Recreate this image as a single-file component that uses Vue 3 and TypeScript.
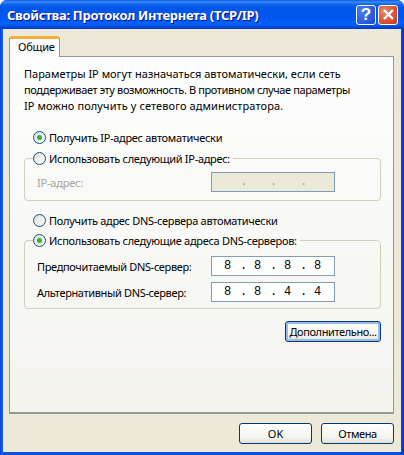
<script setup lang="ts">
interface Ip { label: string; parts: string[] }
const dns: Ip[] = [
  { label: 'Предпочитаемый DNS-сервер:', parts: ['8', '8', '8', '8'] },
  { label: 'Альтернативный DNS-сервер:', parts: ['8', '8', '4', '4'] },
]
</script>

<template>
  <div class="window">
    <header class="titlebar">
      <span class="title">Свойства: Протокол Интернета (TCP/IP)</span>
      <div class="caps">
        <button class="cap help"><span>?</span></button>
        <button class="cap close">
          <svg width="13" height="13" viewBox="0 0 13 13"><path d="M2 2 L11 11 M11 2 L2 11" stroke="#fff" stroke-width="2.4" fill="none" /></svg>
        </button>
      </div>
    </header>
    <div class="frame">
      <div class="tabs"><div class="tab">Общие</div></div>
      <section class="panel">
        <p class="intro">
          <span class="l1">Параметры IP могут назначаться автоматически, если сеть</span>
          <span class="l2">поддерживает эту возможность. В противном случае параметры</span>
          <span class="l3">IP можно получить у сетевого администратора.</span>
        </p>

        <label class="radio first"><i class="dot on"></i>Получить IP-адрес автоматически</label>
        <div class="group g1">
          <label class="radio legend"><i class="dot"></i>Использовать следующий IP-адрес:</label>
          <div class="row">
            <span class="disabled">IP-адрес:</span>
            <div class="ip off"><b></b><em>.</em><b></b><em>.</em><b></b><em>.</em><b></b></div>
          </div>
        </div>

        <label class="radio third"><i class="dot"></i>Получить адрес DNS-сервера автоматически</label>
        <div class="group g2">
          <label class="radio legend"><i class="dot on"></i>Использовать следующие адреса DNS-серверов:</label>
          <div v-for="d in dns" :key="d.label" class="row dnsrow">
            <span class="tight">{{ d.label }}</span>
            <div class="ip">
              <template v-for="(p, i) in d.parts" :key="i"><b>{{ p }}</b><em v-if="i < 3">.</em></template>
            </div>
          </div>
        </div>

        <div class="adv"><button class="btn focus">Дополнительно...</button></div>
      </section>
      <footer class="foot">
        <button class="btn ok">OK</button>
        <button class="btn ok cancel">Отмена</button>
      </footer>
    </div>
  </div>
</template>

<style>
html, body { margin: 0; background: #fff; }
</style>

<style scoped>
.window {
  width: 404px;
  height: 455px;
  box-sizing: border-box;
  display: flex;
  flex-direction: column;
  border-radius: 7px 7px 0 0;
  overflow: hidden;
  background: linear-gradient(90deg, #0831d9 0, #166aee 2px, #0855dd 3px, #0855dd 399px, #0831d9 404px);
  font-family: "Noto Sans", "DejaVu Sans", sans-serif;
  font-size: 11px;
  color: #000;
}
.titlebar {
  height: 29px;
  flex: none;
  display: flex;
  align-items: center;
  justify-content: space-between;
  padding: 0 6px 0 7px;
  box-sizing: border-box;
  background: linear-gradient(180deg, #0a58e0 0, #3b8cf8 2px, #1168ec 4px, #0054ea 8px, #0058f0 18px, #0062fa 24px, #0048dc 27px, #0036c8 29px);
}
.title {
  color: #fff;
  font-family: "Noto Sans", "Open Sans", sans-serif;
  font-weight: 700;
  font-size: 13px;
  letter-spacing: -0.3px;
  text-shadow: 1px 1px 0 #0f1089;
  white-space: nowrap;
}
.caps { display: flex; gap: 2px; }
.cap {
  width: 20px;
  height: 20px;
  padding: 0;
  box-sizing: border-box;
  border: 1px solid #fff;
  border-radius: 3px;
  display: flex;
  align-items: center;
  justify-content: center;
}
.help {
  background: radial-gradient(circle at 30% 30%, #4a7ef0, #2b57d6 70%, #2046b8);
  color: #fff;
  font: 700 17px "Liberation Sans", sans-serif;
}
.close { background: radial-gradient(circle at 30% 30%, #e88a6c, #d9502e 60%, #bd3a1c); }
.frame {
  flex: 1;
  min-height: 0;
  margin: 0 3px 3px;
  padding: 7px 7px 0 6px;
  background: #ece9d8;
  display: flex;
  flex-direction: column;
}
.tabs { display: flex; height: 20px; flex: none; position: relative; z-index: 1; }
.tab {
  width: 51px;
  height: 21px;
  box-sizing: border-box;
  border: 1px solid #919b9c;
  border-top: 3px solid #f4b23a;
  border-bottom: 0;
  border-radius: 3px 3px 0 0;
  background: #fcfcfe;
  padding-left: 8px;
  line-height: 15px;
  letter-spacing: -0.2px;
}
.panel {
  height: 358px;
  flex: none;
  box-sizing: border-box;
  border: 1px solid #919b9c;
  border-bottom-width: 2px;
  background: linear-gradient(180deg, #fdfdfd 0, #f4f3ee 100%);
  padding: 9px 12px 0 14px;
}
.intro { margin: 0; line-height: 16px; white-space: nowrap; }
.intro span { display: block; }
.l2 { letter-spacing: -0.38px; }
.l3 { letter-spacing: 0.1px; }
.radio { display: flex; align-items: center; gap: 3px; height: 16px; white-space: nowrap; letter-spacing: -0.3px; }
.tight { letter-spacing: -0.35px; }
.first { margin: 15px 0 0 9px; }
.dot {
  width: 13px;
  height: 13px;
  box-sizing: border-box;
  border: 1px solid #1c5180;
  border-radius: 50%;
  background: linear-gradient(135deg, #dcdcd6, #fff);
  display: flex;
  align-items: center;
  justify-content: center;
}
.dot.on::after {
  content: "";
  width: 5px;
  height: 5px;
  border-radius: 50%;
  background: #31b42c;
}
.group {
  border: 1px solid #d0d0bf;
  border-radius: 4px;
  box-sizing: border-box;
  width: 357px;
  padding: 0 12px;
}
.g1 { margin-top: 13px; height: 43px; }
.g2 { margin-top: 12px; height: 69px; }
.legend {
  margin: -9px 0 0 -4px;
  background: #fafaf8;
  width: max-content;
  padding-right: 3px;
}
.third { margin: 11px 0 0 9px; }
.row { display: flex; justify-content: space-between; align-items: center; padding-right: 33px; }
.g1 .row { margin-top: 6px; }
.dnsrow { height: 26px; }
.g2 .dnsrow:first-of-type { margin-top: 5px; }
.disabled { color: #a7a69a; letter-spacing: -0.2px; }
.ip {
  width: 124px;
  height: 20px;
  box-sizing: border-box;
  border: 1px solid #7f9db9;
  background: #fff;
  display: flex;
  align-items: center;
  padding-left: 3px;
  font-family: "Liberation Mono", monospace;
  font-size: 12px;
}
.ip b { width: 25px; flex: none; font-weight: 400; text-align: center; }
.ip em { font-style: normal; width: 5px; flex: none; text-align: center; }
.ip.off { background: #ece9d8; color: #a7a69a; }
.adv { display: flex; justify-content: flex-end; margin-top: 12px; }
.btn {
  height: 21px;
  padding: 0;
  box-sizing: border-box;
  border: 1px solid #003c74;
  border-radius: 3px;
  background: linear-gradient(180deg, #fff 0, #f4f4f0 70%, #e3e0d2 100%);
  font: inherit;
  color: #000;
}
.focus { width: 96px; box-shadow: inset 0 0 0 2px #9dbbe8; letter-spacing: -0.4px; }
.foot { display: flex; justify-content: flex-end; gap: 9px; margin-top: 9px; }
.ok { width: 73px; }
.cancel { letter-spacing: -0.4px; }
</style>
